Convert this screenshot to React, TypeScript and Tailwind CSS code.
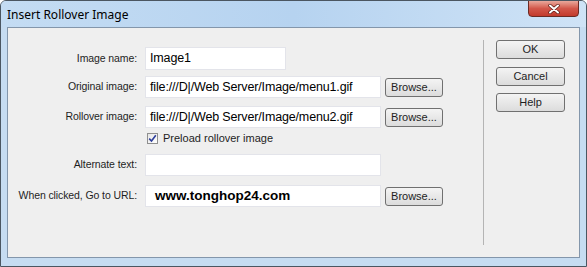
const label = "w-[129px] shrink-0 text-right text-[10.5px] tracking-[-0.1px] text-[#1e1e1e]";
const input = "h-[22px] bg-white border border-[#e3e4ea] flex items-center pl-[4px] text-[12.5px] tracking-[-0.15px] text-black whitespace-nowrap overflow-hidden";
const browse =
  "ml-[4px] w-[58px] h-[19px] rounded-[3px] border border-[#707070] bg-gradient-to-b from-[#f4f4f4] to-[#dcdcdc] text-[11px] text-[#1e1e1e] flex items-center justify-center";
const sideBtn =
  "w-[69px] h-[19px] rounded-[3px] border border-[#707070] bg-gradient-to-b from-[#f4f4f4] to-[#dcdcdc] text-[11px] text-[#1e1e1e] flex items-center justify-center";

export default function App() {
  return (
    <div
      className="w-[587px] h-[267px] bg-[#c6dcf1] border border-[#4b5661] rounded-t-[6px] flex flex-col overflow-hidden"
      style={{ fontFamily: '"Liberation Sans", Arial, sans-serif' }}
    >
      {/* title bar */}
      <div className="h-[26px] shrink-0 flex items-start bg-gradient-to-r from-[#c4dcf3] via-[#b6d3f0] to-[#cfe3f6]">
        <div className="pl-[6px] pt-[7px] text-[12px] leading-[14px] text-black" style={{ fontFamily: '"Noto Sans", "Open Sans", sans-serif' }}>
          Insert Rollover Image
        </div>
        <div className="ml-auto mr-[7px] w-[51px] h-[17px] -mt-px rounded-b-[4px] border border-[#6b2b24] bg-gradient-to-b from-[#e8a89c] via-[#d2574a] to-[#c23a2c] flex items-center justify-center">
          <svg width="12" height="10" viewBox="0 0 12 10">
            <path d="M2 1.5 L10 8.5 M10 1.5 L2 8.5" stroke="#5a1a14" strokeWidth="3.4" strokeLinecap="round" />
            <path d="M2 1.5 L10 8.5 M10 1.5 L2 8.5" stroke="#ffffff" strokeWidth="2" strokeLinecap="round" />
          </svg>
        </div>
      </div>

      {/* client area */}
      <div className="mx-[6px] h-[231px] shrink-0 border border-[#8396ab] bg-[#efefef] flex">
        {/* form */}
        <div className="w-[475px] shrink-0 pt-[19px] flex flex-col">
          <div className="flex items-center">
            <div className={label}>Image name:</div>
            <div className={`${input} ml-[8px] w-[141px] h-[23px]`}>Image1</div>
          </div>
          <div className="flex items-center mt-[6px]">
            <div className={label}>Original image:</div>
            <div className={`${input} ml-[8px] w-[236px]`}>file:///D|/Web Server/Image/menu1.gif</div>
            <div className={browse}>Browse...</div>
          </div>
          <div className="flex items-center mt-[8px]">
            <div className={label}>Rollover image:</div>
            <div className={`${input} ml-[8px] w-[236px]`}>file:///D|/Web Server/Image/menu2.gif</div>
            <div className={browse}>Browse...</div>
          </div>
          <div className="flex items-center mt-[3px] pl-[139px] h-[14px]">
            <div className="w-[11px] h-[11px] border border-[#8f8f8f] bg-gradient-to-br from-[#e6e6e6] to-white flex items-center justify-center">
              <svg width="9" height="9" viewBox="0 0 9 9">
                <path d="M1.2 4.6 L3.5 7 L7.8 1.3" fill="none" stroke="#2d3d9b" strokeWidth="1.6" />
              </svg>
            </div>
            <div className="ml-[5px] text-[11px] text-[#1e1e1e]">Preload rollover image</div>
          </div>
          <div className="flex items-center mt-[9px]">
            <div className={label}>Alternate text:</div>
            <div className={`${input} ml-[8px] w-[236px] h-[20px]`}></div>
          </div>
          <div className="flex items-center mt-[9px]">
            <div className={label}>When clicked, Go to URL:</div>
            <div className={`${input} ml-[8px] w-[236px] h-[21px] pl-[9px] text-[13.5px] tracking-normal font-bold`}>www.tonghop24.com</div>
            <div className={browse}>Browse...</div>
          </div>
        </div>

        {/* separator */}
        <div className="w-px bg-[#b4b4b4] mt-[12px] mb-[12px]"></div>

        {/* buttons */}
        <div className="pl-[12px] pt-[12px] flex flex-col">
          <div className={sideBtn}>OK</div>
          <div className={`${sideBtn} mt-[8px]`}>Cancel</div>
          <div className={`${sideBtn} mt-[7px]`}>Help</div>
        </div>
      </div>

      <div className="flex-1"></div>
    </div>
  );
}
